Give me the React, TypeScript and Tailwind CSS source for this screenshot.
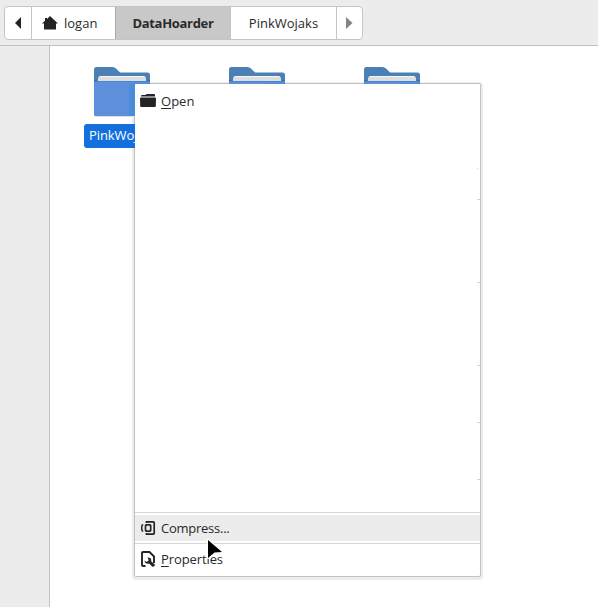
import React from "react";

const text = "whitespace-pre leading-[18px] text-[#2a2a2a]";

function Folder({ className = "" }: { className?: string }) {
  return (
    <svg width="56" height="50" viewBox="0 0 56 50" className={`relative z-10 block shrink-0 ${className}`}>
      <path d="M0 2.500Q0 0 2.500 0H18.500Q20.500 0 22 1.500L26 5.500H53.500Q56 5.500 56 8V20H0Z" fill="#4a80b5" />
      <path d="M0 13L4 14V20H0ZM56 13L52 14V20H56Z" fill="#3567a0" />
      <path d="M4 14V12Q4 9 7 9H49Q52 9 52 12V14Z" fill="#dedede" />
      <path d="M5 10Q5.500 9 7 9H49Q50.500 9 51 10Z" fill="#f5f5f5" />
      <path d="M0 15.500Q0 14 1.500 14H54.500Q56 14 56 15.500V47.500Q56 49 54.500 49H1.500Q0 49 0 47.500Z" fill="#5c90db" />
      <path d="M35 49V20Q35 16 40 16H56V49Z" fill="#4d8cda" />
      <path d="M0 14.500H56" stroke="#4587d2" />
      <path d="M1 49.500H56" stroke="#dedede" />
    </svg>
  );
}

function OpenIcon() {
  return (
    <svg width="16" height="16" viewBox="0 0 16 16" className="block shrink-0" fill="#242424">
      <path d="M1 3.500V3Q1 2 2 2H5.500L6 1.500Q6.300 1 7 1H14Q15 1 15 2V3.500Z" />
      <path d="M1 4.500H15Q16 4.500 16 5.500L15.800 13Q15.800 14 14.800 14H1.200Q.2 14 .2 13L0 5.500Q0 4.500 1 4.500Z" />
    </svg>
  );
}

function CompressIcon() {
  return (
    <svg width="16" height="16" viewBox="0 0 16 16" className="block shrink-0" fill="none" stroke="#242424">
      <path d="M6.500 3V1.800H13.300Q14.200 1.800 14.200 2.700V13.300Q14.200 14.200 13.300 14.200H6.500V13" strokeWidth="1.700" />
      <rect x="5.500" y="4.900" width="5.200" height="6.200" rx=".8" strokeWidth="1.700" />
      <path d="M3.200 4.800Q1.800 4.800 1.800 6.200V9.800Q1.800 11.200 3.200 11.200" strokeWidth="1.500" />
    </svg>
  );
}

function PropertiesIcon() {
  return (
    <svg width="16" height="16" viewBox="0 0 16 16" className="block shrink-0">
      <path d="M5.500 15H3Q2 15 2 14V2Q2 1 3 1H9.500L14 5.500V12" fill="none" stroke="#242424" strokeWidth="1.900" />
      <path d="M7.500 6.500Q11 6 11.300 9.300L11.100 10.300L14.800 13.500V14.500L13.500 15.800H12.500L9 12.500Q5 13.500 4.500 9.500L6.700 11L8.800 9.200Z" fill="#242424" />
    </svg>
  );
}

function Desktop() {
  return (
    <div
      className="relative flex h-[607px] w-[598px] flex-col overflow-hidden bg-white text-[13px]"
      style={{ fontFamily: '"Open Sans", "Noto Sans", sans-serif' }}
    >
      <header className="h-[46px] shrink-0 border-b border-[#c2c2c2] bg-[#ececec] pt-[6px] pl-1">
        <nav className="flex h-[34px] w-[359px] overflow-hidden rounded-[4px] border border-[#c5c5c5] bg-white">
          <div className="flex w-[27px] items-center border-r border-[#c5c5c5] pl-[10px]">
            <svg width="7" height="12" viewBox="0 0 7 12"><path d="M6 0V12L0 6Z" fill="#242424" /></svg>
          </div>
          <div className="flex w-[83px] items-center pl-[10px]">
            <svg width="16" height="16" viewBox="0 0 16 16" className="shrink-0">
              <path d="M8 1L16 8.500H14V14.500H2V8.500H0L3 5.800V3H5V4Z" fill="#242424" />
            </svg>
            <span className={`${text} ml-[6px]`}>logan</span>
          </div>
          <div className="-my-px flex w-[116px] items-center justify-center border border-[#ababab] border-r-[#c5c5c5] bg-[#c8c8c8] font-bold">
            <span className={`${text} tracking-[-0.3px]`}>DataHoarder</span>
          </div>
          <div className="flex w-[106px] items-center justify-center border-r border-[#c5c5c5]">
            <span className={text}>PinkWojaks</span>
          </div>
          <div className="flex flex-1 items-center pl-[9px]">
            <svg width="7" height="12" viewBox="0 0 7 12"><path d="M0 0V12L6.500 6Z" fill="#858585" /></svg>
          </div>
        </nav>
      </header>
      <div className="flex flex-1">
        <aside className="w-[50px] border-r border-[#c2c2c2] bg-[#ececec]" />
        <main className="flex items-start gap-[79px] pt-[21px] pl-[44px]">
          <div className="flex w-14 flex-col">
            <Folder className="[clip-path:polygon(0_0,56px_0,56px_17px,41px_17px,41px_50px,0_50px)]" />
            <div className="relative z-10 -ml-[10px] mt-[7px] flex h-6 w-[51px] items-center overflow-hidden rounded-l-[3px] bg-[#126fdc] pl-[5px]">
              <span className="whitespace-pre text-white tracking-[-0.1px]">PinkWojaks</span>
            </div>
          </div>
          <Folder className="[clip-path:polygon(0_0,56px_0,56px_17px,0_17px)]" />
          <Folder className="[clip-path:polygon(0_0,56px_0,56px_17px,0_17px)]" />
        </main>
      </div>

      <div className="absolute top-[83px] left-[134px] flex h-[494px] w-[347px] flex-col rounded-[2px] border border-[#c2c2c2] bg-white shadow-[0_1px_0_2px_#ececec]">
        <div className="mt-[4px] flex h-[26px] items-center pl-[5px]">
          <OpenIcon />
          <span className={`${text} ml-[5px]`}><span className="underline underline-offset-2">O</span>pen</span>
        </div>
        <div className="flex flex-1 flex-col items-end">
          <i className="mt-[54px] mr-[2px] h-px w-px bg-[#d5d5d5]" />
          <i className="mt-[30px] h-px w-[3px] bg-[#d5d5d5]" />
          <i className="mt-[82px] h-px w-[3px] bg-[#d5d5d5]" />
          <i className="mt-[82px] h-px w-[3px] bg-[#d5d5d5]" />
          <i className="mt-[56px] h-px w-[3px] bg-[#d5d5d5]" />
          <i className="mt-[56px] h-px w-[3px] bg-[#d5d5d5]" />
        </div>
        <div className="h-px bg-[#d5d5d5]" />
        <div className="mt-[2px] flex h-[26px] items-center bg-[#ececec] pl-[5px]">
          <CompressIcon />
          <span className={`${text} ml-[5px] tracking-[-0.25px]`}>Compress...</span>
        </div>
        <div className="mt-[2px] h-px bg-[#d5d5d5]" />
        <div className="mt-[2px] mb-[4px] flex h-[26px] items-center pl-[5px]">
          <PropertiesIcon />
          <span className={`${text} ml-[5px] tracking-[-0.1px]`}><span className="underline underline-offset-2">P</span>roperties</span>
        </div>
      </div>
      <svg className="absolute top-[538px] left-[206px]" width="18" height="22" viewBox="0 0 18 22">
        <path d="M2 2L16 14L8.500 14.500L2 20Z" fill="#000" stroke="#fff" strokeWidth="2" paintOrder="stroke" strokeLinejoin="round" />
      </svg>
    </div>
  );
}

export default function App() {
  return <Desktop />;
}
